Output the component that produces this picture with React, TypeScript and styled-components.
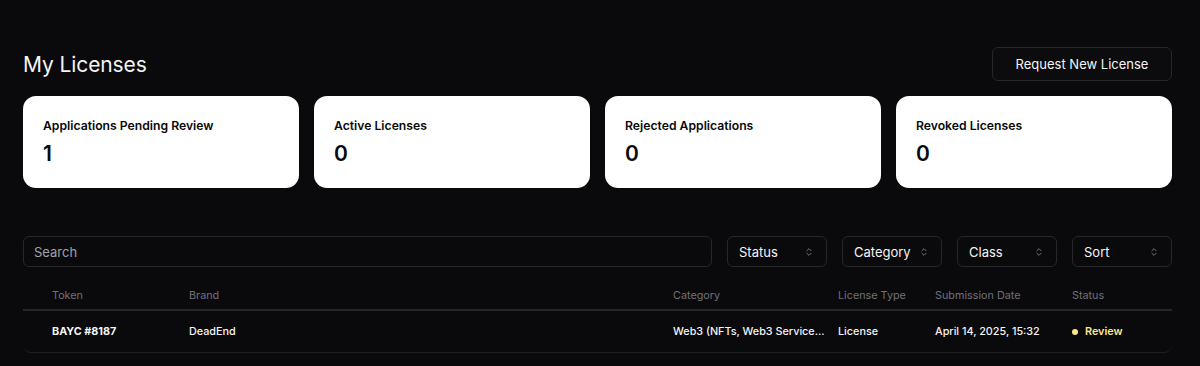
import React from 'react'
import styled, { createGlobalStyle } from 'styled-components'
import { ChevronsUpDown } from 'lucide-react'

const GlobalStyle = createGlobalStyle`
  html, body {
    margin: 0;
    padding: 0;
    background: #0a0a0c;
    font-family: Inter, 'Noto Sans', 'Liberation Sans', sans-serif;
    color: #fafafa;
  }
`

const Page = styled.div`
  width: 1200px;
  height: 366px;
  box-sizing: border-box;
  padding: 47px 28px 0 23px;
  overflow: hidden;
`

const Header = styled.div`
  display: flex;
  justify-content: space-between;
  align-items: center;
  height: 34px;
`

const Title = styled.h1`
  margin: 0;
  font-size: 21px;
  font-weight: 400;
  letter-spacing: -0.1px;
  color: #f4f4f5;
`

const OutlineButton = styled.button`
  width: 180px;
  height: 34px;
  background: #0c0c0e;
  border: 1px solid #27272a;
  border-radius: 6px;
  color: #f4f4f5;
  font-family: inherit;
  font-size: 13px;
  font-weight: 400;
`

const Cards = styled.div`
  display: grid;
  grid-template-columns: repeat(4, 1fr);
  gap: 15px;
  margin-top: 15px;
`

const Card = styled.div`
  height: 92px;
  background: #ffffff;
  border-radius: 13px;
  padding: 22px 20px 0;
  box-sizing: border-box;
  color: #09090b;
`

const CardLabel = styled.div`
  font-size: 12.2px;
  font-weight: 600;
  line-height: 16px;
`

const CardValue = styled.div`
  margin-top: 7px;
  font-size: 21px;
  font-weight: 600;
  line-height: 26px;
`

const Toolbar = styled.div`
  display: flex;
  gap: 15px;
  margin-top: 48px;
  height: 31px;
`

const SearchBox = styled.div`
  flex: 1;
  border: 1px solid #27272a;
  border-radius: 6px;
  display: flex;
  align-items: center;
  padding: 0 10px;
  font-size: 13px;
  color: #a1a1aa;
`

const Select = styled.div`
  width: 100px;
  box-sizing: border-box;
  border: 1px solid #27272a;
  border-radius: 6px;
  display: flex;
  align-items: center;
  justify-content: space-between;
  padding: 0 12px 0 11px;
  font-size: 13px;
  color: #f4f4f5;
  svg {
    color: #8a8a90;
  }
`

const Table = styled.div`
  margin-top: 11px;
  border-bottom: 1px solid #1f1f23;
  border-radius: 0 0 8px 8px;
`

const Row = styled.div<{ $head?: boolean }>`
  display: grid;
  grid-template-columns: 137px 484px 165px 97px 137px 1fr;
  padding-left: 29px;
  padding-top: ${p => (p.$head ? '3px' : '0')};
  box-sizing: border-box;
  align-items: center;
  height: ${p => (p.$head ? '33px' : '41px')};
  border-bottom: ${p => (p.$head ? '2px solid #27272a' : 'none')};
  font-size: 10.8px;
  color: ${p => (p.$head ? '#71717a' : '#f4f4f5')};
  font-weight: ${p => (p.$head ? 400 : 500)};
`

const Cell = styled.div<{ $bold?: boolean }>`
  font-weight: ${p => (p.$bold ? 700 : 'inherit')};
  white-space: nowrap;
  padding-right: 8px;
`

const StatusBadge = styled.div`
  display: flex;
  align-items: center;
  gap: 7px;
  color: #fde68a;
  font-weight: 600;
`

const Dot = styled.span`
  width: 6px;
  height: 6px;
  border-radius: 50%;
  background: #fde68a;
`

const stats = [
  { label: 'Applications Pending Review', value: 1 },
  { label: 'Active Licenses', value: 0 },
  { label: 'Rejected Applications', value: 0 },
  { label: 'Revoked Licenses', value: 0 },
]

const filters = ['Status', 'Category', 'Class', 'Sort']

const App: React.FC = () => {
  return (
    <>
      <GlobalStyle />
      <Page>
        <Header>
          <Title>My Licenses</Title>
          <OutlineButton>Request New License</OutlineButton>
        </Header>
        <Cards>
          {stats.map(s => (
            <Card key={s.label}>
              <CardLabel>{s.label}</CardLabel>
              <CardValue>{s.value}</CardValue>
            </Card>
          ))}
        </Cards>
        <Toolbar>
          <SearchBox>Search</SearchBox>
          {filters.map(f => (
            <Select key={f}>
              {f}
              <ChevronsUpDown size={10} strokeWidth={2} />
            </Select>
          ))}
        </Toolbar>
        <Table>
          <Row $head>
            <Cell>Token</Cell>
            <Cell>Brand</Cell>
            <Cell>Category</Cell>
            <Cell>License Type</Cell>
            <Cell>Submission Date</Cell>
            <Cell>Status</Cell>
          </Row>
          <Row>
            <Cell $bold>BAYC #8187</Cell>
            <Cell>DeadEnd</Cell>
            <Cell>Web3 (NFTs, Web3 Service...</Cell>
            <Cell>License</Cell>
            <Cell>April 14, 2025, 15:32</Cell>
            <Cell>
              <StatusBadge>
                <Dot />
                Review
              </StatusBadge>
            </Cell>
          </Row>
        </Table>
      </Page>
    </>
  )
}

export default App
